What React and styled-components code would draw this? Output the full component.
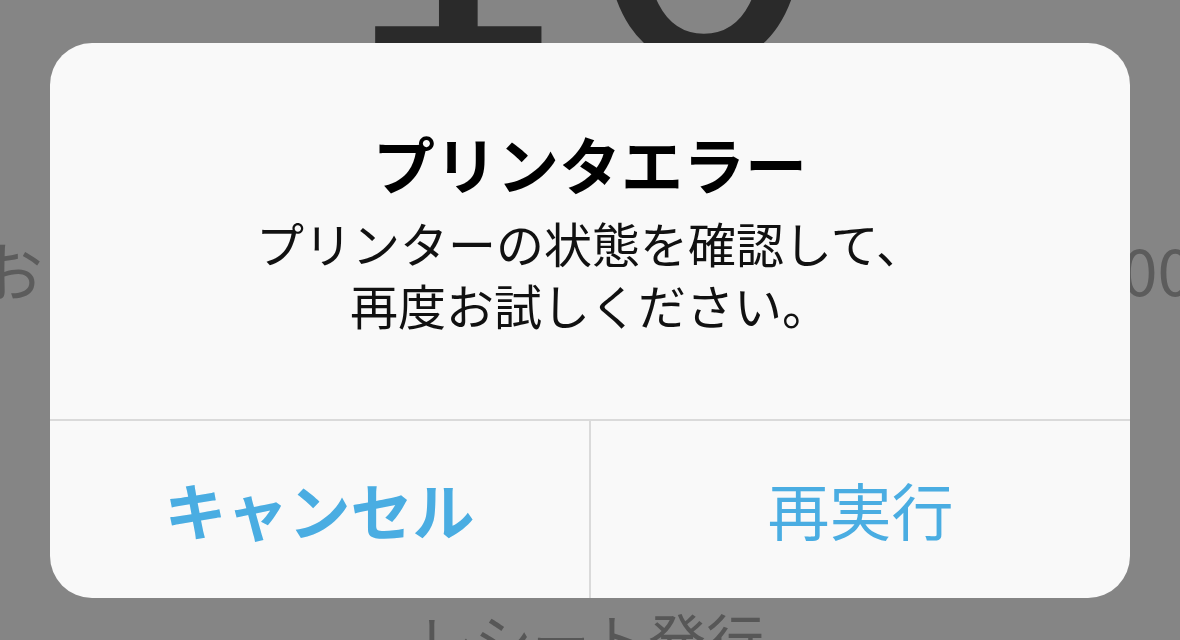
import React from 'react';
import styled, { createGlobalStyle } from 'styled-components';

const GlobalStyle = createGlobalStyle`
  html, body {
    margin: 0;
    padding: 0;
    background: #ffffff;
  }
  body {
    font-family: "Noto Sans CJK JP", "Noto Sans", sans-serif;
  }
`;

// register screen sitting behind the alert
const Screen = styled.div`
  width: 1180px;
  height: 640px;
  overflow: hidden;
  display: flex;
  flex-direction: column;
  background: #ffffff;
`;

const Amount = styled.div`
  margin-top: -276px;
  padding-right: 24px;
  font-family: "DejaVu Sans", sans-serif;
  font-size: 396px;
  line-height: 1;
  text-align: center;
  color: #525252;
`;

const PaymentRow = styled.div`
  display: flex;
  justify-content: space-between;
  margin: 116px -13px 0 -21px;
  font-size: 64px;
  line-height: 1;
  color: #b1b1b1;
  white-space: nowrap;
`;

const RowLabel = styled.span`
  letter-spacing: 14px;
`;

const ReceiptButton = styled.div`
  margin-top: 309px;
  font-size: 58px;
  line-height: 1;
  text-align: center;
  color: #a8a8a8;
`;

const Overlay = styled.div`
  position: fixed;
  inset: 0;
  display: flex;
  align-items: center;
  justify-content: center;
  background: rgba(0, 0, 0, 0.48);
`;

const Alert = styled.div`
  width: 1080px;
  height: 555px;
  display: flex;
  flex-direction: column;
  border-radius: 42px;
  overflow: hidden;
  background: #f9f9f9;
`;

const Message = styled.div`
  height: 378px;
  display: flex;
  flex-direction: column;
  align-items: center;
  justify-content: center;
  border-bottom: 2px solid #dadada;
  box-sizing: border-box;
  text-align: center;
`;

const Title = styled.div`
  font-size: 62px;
  font-weight: 700;
  line-height: 72px;
  color: #000000;
  margin-bottom: 12px;
`;

const Body = styled.div`
  font-size: 48px;
  line-height: 62px;
  color: #111111;
`;

const Actions = styled.div`
  flex: 1;
  display: flex;
`;

const ActionButton = styled.button`
  flex: 1;
  border: none;
  border-left: ${(p) => (p.$first ? 'none' : '2px solid #dadada')};
  background: transparent;
  padding: 0;
  font-family: "Noto Sans CJK JP", "Noto Sans", sans-serif;
  font-size: 62px;
  font-weight: ${(p) => (p.$bold ? 700 : 400)};
  color: #4aade2;
  cursor: pointer;
`;

export default function App() {
  return (
    <>
      <GlobalStyle />
      <Screen>
        <Amount>10</Amount>
        <PaymentRow>
          <RowLabel>お預かり</RowLabel>
          <span>¥1,000</span>
        </PaymentRow>
        <ReceiptButton>レシート発行</ReceiptButton>
      </Screen>
      <Overlay>
        <Alert>
          <Message>
            <Title>プリンタエラー</Title>
            <Body>
              プリンターの状態を確認して、
              <br />
              再度お試しください。
            </Body>
          </Message>
          <Actions>
            <ActionButton $first $bold>キャンセル</ActionButton>
            <ActionButton>再実行</ActionButton>
          </Actions>
        </Alert>
      </Overlay>
    </>
  );
}
